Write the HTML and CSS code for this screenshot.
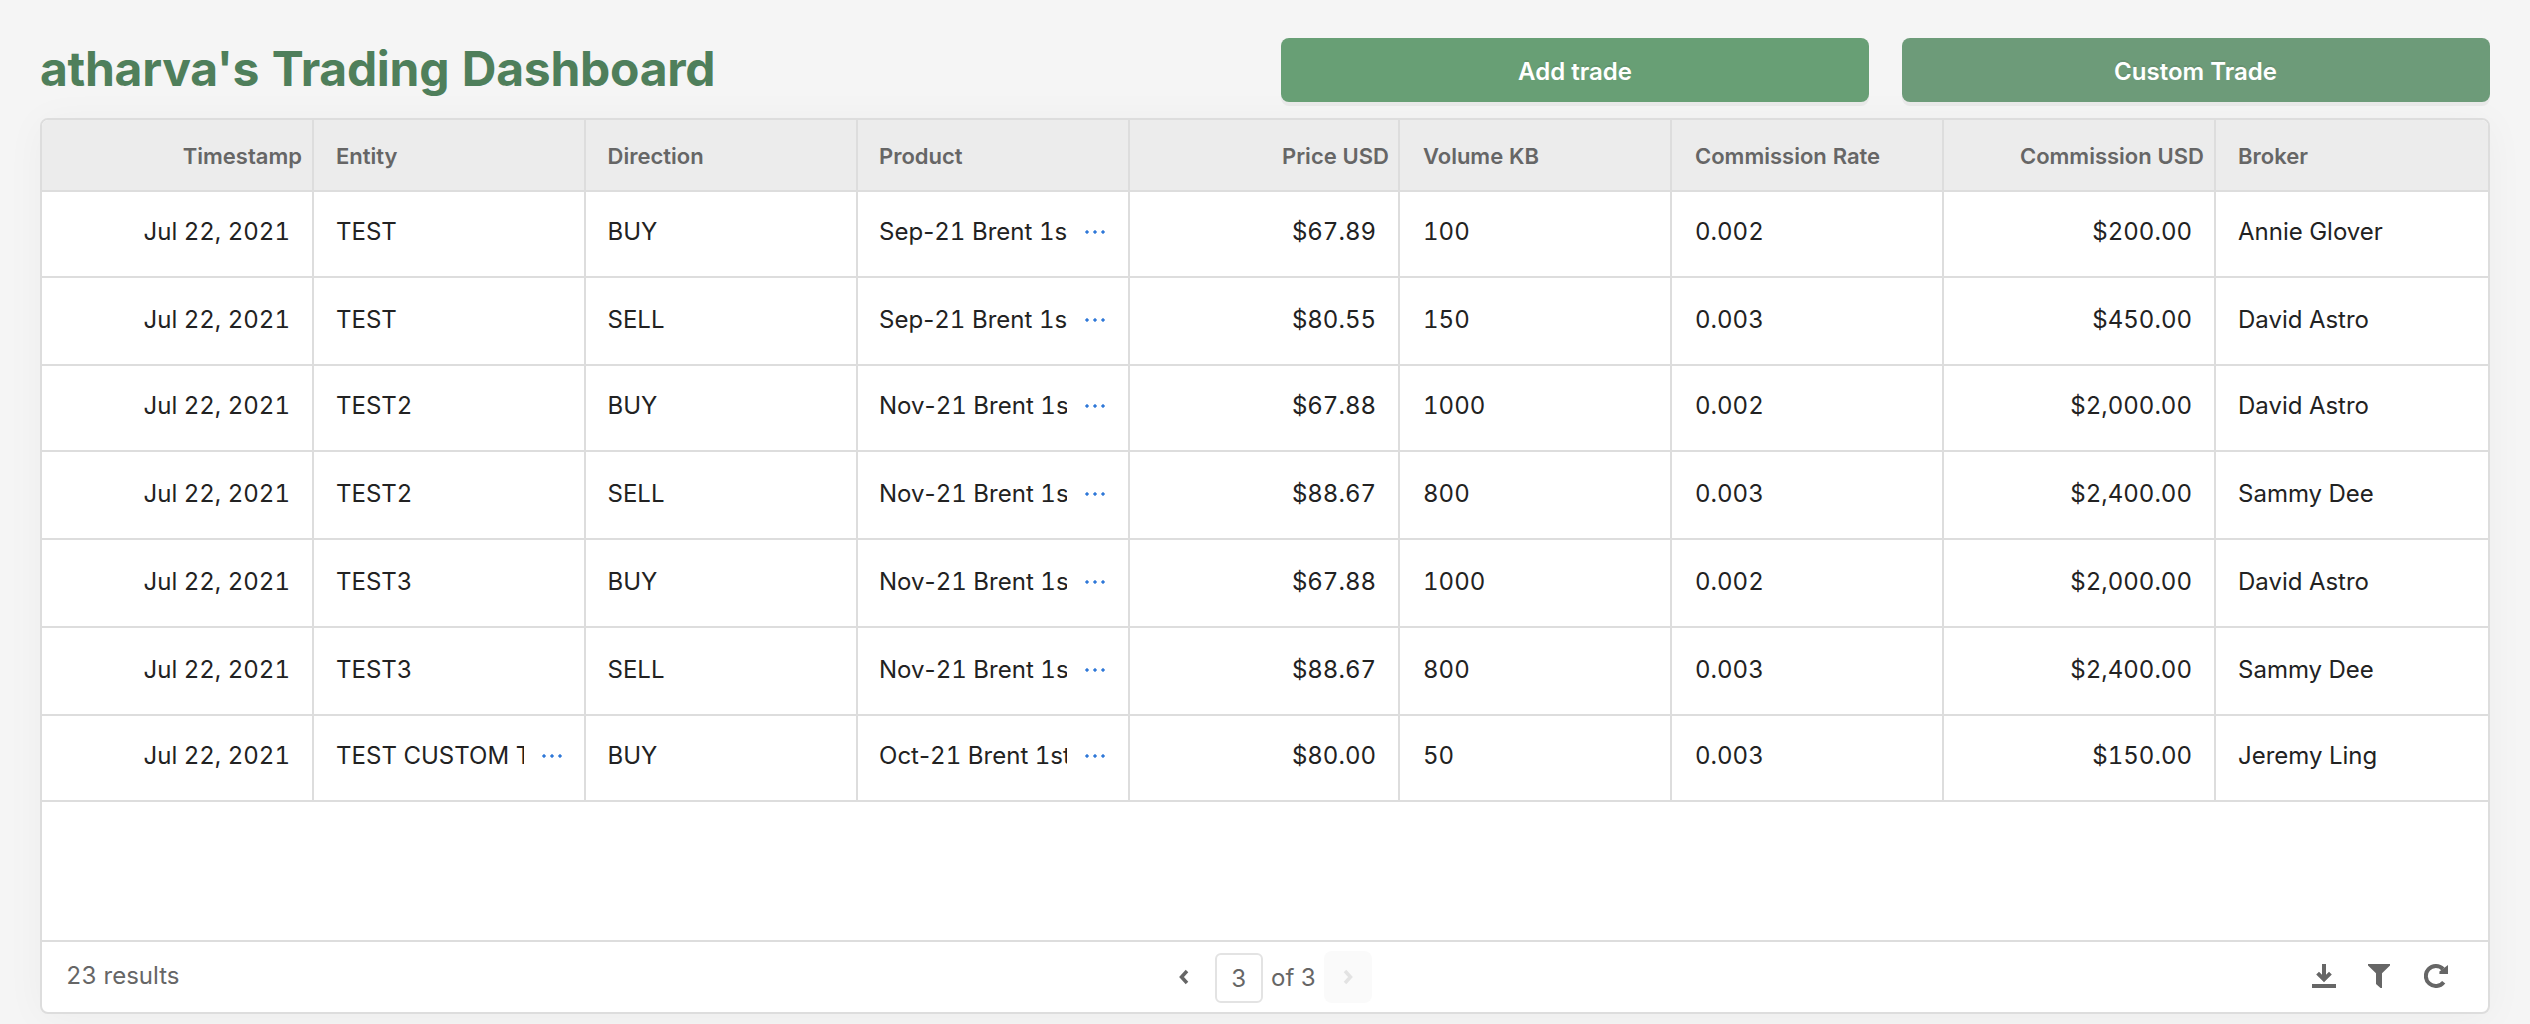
FILE: index.html
```
<!DOCTYPE html>
<html lang="en">
<head>
<meta charset="utf-8">
<title>Trading Dashboard</title>
<link rel="stylesheet" href="styles.css">
</head>
<body>
<header class="top">
  <h1 class="title">atharva's Trading Dashboard</h1>
  <div class="actions">
    <button class="btn">Add trade</button>
    <button class="btn btn-alt">Custom Trade</button>
  </div>
</header>
<main class="panel">
  <div class="row head"><div class="cell num">Timestamp</div><div class="cell">Entity</div><div class="cell">Direction</div><div class="cell">Product</div><div class="cell num">Price USD</div><div class="cell">Volume KB</div><div class="cell">Commission Rate</div><div class="cell num">Commission USD</div><div class="cell">Broker</div></div>
  <div class="row short"><div class="cell num">Jul 22, 2021</div><div class="cell">TEST</div><div class="cell">BUY</div><div class="cell"><span class="clip">Sep<span class="dash">-</span>21 Brent 1st Line</span><i class="more"></i></div><div class="cell num">$67.89</div><div class="cell">100</div><div class="cell">0.002</div><div class="cell num">$200.00</div><div class="cell">Annie Glover</div></div>
  <div class="row"><div class="cell num">Jul 22, 2021</div><div class="cell">TEST</div><div class="cell">SELL</div><div class="cell"><span class="clip">Sep<span class="dash">-</span>21 Brent 1st Line</span><i class="more"></i></div><div class="cell num">$80.55</div><div class="cell">150</div><div class="cell">0.003</div><div class="cell num">$450.00</div><div class="cell">David Astro</div></div>
  <div class="row short"><div class="cell num">Jul 22, 2021</div><div class="cell">TEST2</div><div class="cell">BUY</div><div class="cell"><span class="clip">Nov<span class="dash">-</span>21 Brent 1st Line</span><i class="more"></i></div><div class="cell num">$67.88</div><div class="cell">1000</div><div class="cell">0.002</div><div class="cell num">$2,000.00</div><div class="cell">David Astro</div></div>
  <div class="row"><div class="cell num">Jul 22, 2021</div><div class="cell">TEST2</div><div class="cell">SELL</div><div class="cell"><span class="clip">Nov<span class="dash">-</span>21 Brent 1st Line</span><i class="more"></i></div><div class="cell num">$88.67</div><div class="cell">800</div><div class="cell">0.003</div><div class="cell num">$2,400.00</div><div class="cell">Sammy Dee</div></div>
  <div class="row"><div class="cell num">Jul 22, 2021</div><div class="cell">TEST3</div><div class="cell">BUY</div><div class="cell"><span class="clip">Nov<span class="dash">-</span>21 Brent 1st Line</span><i class="more"></i></div><div class="cell num">$67.88</div><div class="cell">1000</div><div class="cell">0.002</div><div class="cell num">$2,000.00</div><div class="cell">David Astro</div></div>
  <div class="row"><div class="cell num">Jul 22, 2021</div><div class="cell">TEST3</div><div class="cell">SELL</div><div class="cell"><span class="clip">Nov<span class="dash">-</span>21 Brent 1st Line</span><i class="more"></i></div><div class="cell num">$88.67</div><div class="cell">800</div><div class="cell">0.003</div><div class="cell num">$2,400.00</div><div class="cell">Sammy Dee</div></div>
  <div class="row short"><div class="cell num">Jul 22, 2021</div><div class="cell"><span class="clip">TEST CUSTOM TRADE</span><i class="more"></i></div><div class="cell">BUY</div><div class="cell"><span class="clip">Oct<span class="dash">-</span>21 Brent 1st Line</span><i class="more"></i></div><div class="cell num">$80.00</div><div class="cell">50</div><div class="cell">0.003</div><div class="cell num">$150.00</div><div class="cell">Jeremy Ling</div></div>
  <footer class="foot">
    <span class="results">23 results</span>
    <div class="pager">
      <span class="page-btn"><svg width="10" height="16" viewBox="0 0 10 16"><path d="M8 2 2.500 8 8 14"/></svg></span>
      <span class="page">3</span>
      <span class="of">of 3</span>
      <span class="page-btn disabled"><svg width="10" height="16" viewBox="0 0 10 16"><path d="M2 2 7.500 8 2 14"/></svg></span>
    </div>
    <div class="tools">
      <svg width="24" height="24" viewBox="0 0 24 24"><path d="M0 20h24v4H0zM10 0h4v10.700l3-3 2.800 2.800L12 18.200 4.200 10.500 7 7.700l3 3z"/></svg>
      <svg class="filter" width="22" height="24" viewBox="0 0 22 24"><path d="M0 0h22v1.500L14 9.200V24h-1.500L8 20V9.200L0 1.500z"/></svg>
      <svg width="24" height="24" viewBox="0 0 24 24"><path class="arc" d="M19.700 18.200A10 10 0 1 1 19 5"/><path d="M24 1v9h-8.600V7.500z"/></svg>
    </div>
  </footer>
</main>
</body>
</html>
```
FILE: styles.css
```
* { box-sizing: border-box; }
body {
  margin: 0;
  height: 1024px;
  padding: 38px 40px 0;
  overflow: hidden;
  background: #f5f5f5;
  font-family: Inter, sans-serif;
  font-size: 24px;
  font-variant-numeric: tabular-nums;
  color: #222;
}
.top { display: flex; justify-content: space-between; height: 80px; padding-right: 0.5px; }
.title { margin: 0; font-size: 48px; line-height: 62px; font-weight: 700; letter-spacing: -0.28px; color: #4f7f5b; white-space: nowrap; }
.actions { display: flex; gap: 32.5px; }
.btn {
  width: 588px;
  height: 64px;
  padding: 2px 0 0;
  border: 0;
  border-radius: 8px;
  background: #689f75;
  box-shadow: 0 4px 0 rgba(0, 0, 0, .045);
  color: #fff;
  font: 600 24px Inter, sans-serif;
  text-shadow: 0 -2px 0 rgba(0, 0, 0, .08);
}
.btn-alt { background: #6d9b79; }
.panel {
  display: flex;
  flex-direction: column;
  height: 896px;
  border: 2px solid #ddd;
  border-radius: 8px;
  background: #fff;
  box-shadow: 0 4px 40px rgba(0, 0, 0, .04);
  overflow: hidden;
}
.row {
  display: grid;
  grid-template-columns: 272px 272px 272px 272px 270px 272px 272px 272px 272px;
  height: 88px;
  border-bottom: 2px solid #ddd;
}
.short { height: 86px; }
.cell {
  display: flex;
  padding: 26px 22px 0 22px;
  border-right: 2px solid #ddd;
  line-height: 32px;
  white-space: nowrap;
}
.short .cell { padding-top: 24px; }
.cell:last-child { border-right: 0; }
.cell:nth-child(3) { padding-left: 21.5px; }
.cell:nth-child(4) { padding-left: 21px; }
.cell:nth-child(6), .cell:nth-child(7) { padding-left: 23px; }
.num { justify-content: flex-end; }
.clip { flex: none; width: 188px; overflow: hidden; letter-spacing: 0.03px; }
.dash { font-variant-numeric: normal; }
.more {
  flex: none;
  width: 22px;
  height: 4px;
  margin: 14px 0 0 18px;
  background: radial-gradient(circle at 2px 2px, #2f78d8 1.400px, transparent 1.900px) 0 0 / 8px 4px;
}
.row.head { height: 72px; background: #ececec; color: #666; font-size: 22px; font-weight: 600; }
.head .cell { padding-top: 20px; }
.head .num { padding-right: 10px; }
.head .num:nth-child(5) { padding-right: 9px; }
.foot {
  display: grid;
  grid-template-columns: 1fr auto 1fr;
  align-items: center;
  height: 72px;
  margin-top: auto;
  padding: 0 40px 0 24px;
  border-top: 2px solid #ddd;
  color: #666;
}
.results { padding-bottom: 4px; }
.pager { display: flex; align-items: center; margin-left: 18px; }
.page-btn { display: grid; place-items: center; width: 48px; height: 52px; border-radius: 8px; }
.page-btn path { fill: none; stroke: #666; stroke-width: 3.500; }
.disabled { background: #fafafa; }
.disabled path { stroke: #e3e3e3; }
.page { display: grid; place-items: center; width: 48px; height: 50px; margin: 2px 8px 0 7.5px; border: 2px solid #e3e3e3; border-radius: 6px; }
.of { margin-right: 8px; padding-top: 1px; }
.tools { display: flex; justify-content: flex-end; gap: 32px; padding-bottom: 2px; fill: #666; }
.filter { margin-right: 2px; }
.arc { fill: none; stroke: #666; stroke-width: 4; }
```
